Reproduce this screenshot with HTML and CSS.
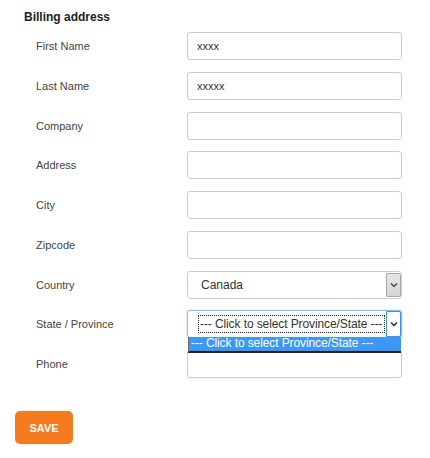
FILE: index.html
```html
<!DOCTYPE html>
<html>
<head>
    <title>Billing address</title>
    <link rel="stylesheet" href="styles.css">
</head>
<body>
    <div class="billing">
        <h4 class="title">Billing address</h4>

        <div class="fields">
            <label class="label">First Name</label>
            <input class="input" type="text" value="xxxx">

            <label class="label">Last Name</label>
            <input class="input" type="text" value="xxxxx">

            <label class="label">Company</label>
            <input class="input" type="text">

            <label class="label">Address</label>
            <input class="input" type="text">

            <label class="label">City</label>
            <input class="input" type="text">

            <label class="label">Zipcode</label>
            <input class="input" type="text">

            <label class="label">Country</label>
            <div class="select">
                <span class="select-text">Canada</span>
                <span class="select-arrow">
                    <svg width="8" height="6" viewBox="0 0 8 6"><path d="M1 1.5 L4 4.5 L7 1.5" fill="none" stroke="#333" stroke-width="1.2"/></svg>
                </span>
            </div>

            <label class="label">State / Province</label>
            <div class="select select-open">
                <span class="select-text"><span class="focus-box">--- Click to select Province/State ---</span></span>
                <span class="select-arrow">
                    <svg width="8" height="6" viewBox="0 0 8 6"><path d="M1 1.5 L4 4.5 L7 1.5" fill="none" stroke="#222" stroke-width="1.4"/></svg>
                </span>
                <div class="dropdown">--- Click to select Province/State ---</div>
            </div>

            <label class="label">Phone</label>
            <input class="input" type="text">
        </div>

        <button class="save">SAVE</button>
    </div>
</body>
</html>
```

FILE: styles.css
```css
body {
    margin: 0;
    font-family: "Liberation Sans", Arial, sans-serif;
    background: white;
}
.billing {
    padding: 10px 0 0 0;
}
.title {
    margin: 0 0 7px 24px;
    font-size: 12px;
    font-weight: bold;
    color: #222;
    line-height: 15px;
}
.fields {
    display: grid;
    grid-template-columns: 151px 215px;
    grid-auto-rows: 28px;
    row-gap: 11.75px;
    padding-left: 36px;
    align-items: center;
}
.label {
    font-size: 11px;
    color: #444;
}
.input {
    box-sizing: border-box;
    width: 215px;
    height: 28px;
    margin: 0;
    padding: 0 9px;
    border: 1px solid #ccc;
    border-radius: 3px;
    font-family: "Liberation Sans", Arial, sans-serif;
    font-size: 11px;
    color: #333;
    outline: none;
}
.select {
    position: relative;
    box-sizing: border-box;
    display: flex;
    width: 215px;
    height: 28px;
    border: 1px solid #ccc;
    border-radius: 3px;
    background: white;
}
.select-text {
    flex: 1;
    display: flex;
    align-items: center;
    padding-left: 13px;
    font-size: 12px;
    color: #333;
}
.select-arrow {
    box-sizing: border-box;
    width: 15px;
    margin: 1px 0;
    display: flex;
    align-items: center;
    justify-content: center;
    background: linear-gradient(#e6e6e6, #d6d6d6);
    border: 1px solid #a9a9a9;
    border-radius: 0 2px 2px 0;
}
.select-open {
    border-color: #8fbbe8;
    box-shadow: 0 0 2px #a9cdf2;
}
.select-open .select-text {
    padding-left: 10px;
}
.focus-box {
    box-sizing: border-box;
    height: 18px;
    display: flex;
    align-items: center;
    padding: 0 2px 0 1px;
    border: 1px dotted #222;
    white-space: nowrap;
    letter-spacing: -0.1px;
}
.select-open .select-arrow {
    background: white;
    border: 1px solid #3c8fe3;
    margin: 0;
}
.dropdown {
    position: absolute;
    top: 100%;
    left: 0;
    right: 0;
    height: 14px;
    line-height: 13px;
    padding-left: 2px;
    background: #3d97f5;
    border-left: 1px solid #6a6a6a;
    border-bottom: 2px solid #222;
    color: white;
    font-size: 12px;
    letter-spacing: -0.1px;
    white-space: nowrap;
}
.save {
    margin: 33px 0 0 15px;
    width: 58px;
    height: 33px;
    border: none;
    border-radius: 5px;
    background: #f47b20;
    color: white;
    font-family: "Liberation Sans", Arial, sans-serif;
    font-size: 11px;
    font-weight: bold;
    cursor: pointer;
}
```
